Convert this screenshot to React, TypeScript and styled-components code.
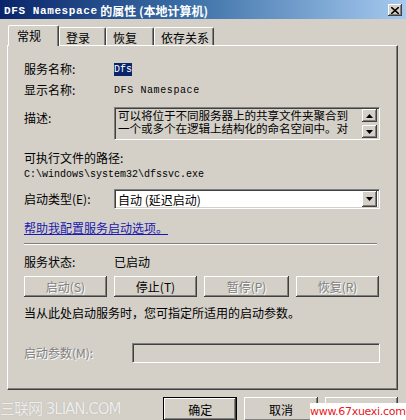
import styled, { createGlobalStyle, css } from "styled-components";

const GlobalStyle = createGlobalStyle`
  html, body {
    margin: 0;
    padding: 0;
    background: #d4d0c8;
  }
  body {
    font-family: "Noto Sans CJK SC", "DejaVu Sans", sans-serif;
    font-size: 12px;
    color: #000;
  }
`;

const Window = styled.div`
  position: relative;
  width: 406px;
  height: 420px;
  overflow: hidden;
  background: #d4d0c8;
  display: flex;
  flex-direction: column;
`;

const TitleBar = styled.div`
  height: 19px;
  display: flex;
  align-items: center;
  justify-content: space-between;
  padding: 0 4px 0 4px;
  background: linear-gradient(90deg, #0a246a 0%, #3a6ea5 45%, #a6caf0 100%);
  color: #fff;
  flex-shrink: 0;
`;

const TitleText = styled.div`
  font-weight: bold;
  font-size: 12px;
  display: flex;
  align-items: center;
  padding-top: 2px;
`;

const MonoText = styled.span<{ $size?: number; $spacing?: number }>`
  font-family: "Liberation Mono", "DejaVu Sans Mono", monospace;
  font-size: ${(p) => p.$size ?? 10}px;
  letter-spacing: ${(p) => p.$spacing ?? 0}px;
`;

const CloseButton = styled.div`
  width: 14px;
  height: 12px;
  margin-top: 1px;
  background: #d4d0c8;
  box-shadow: inset -1px -1px #404040, inset 1px 1px #fff,
    inset -2px -2px #808080;
  display: flex;
  align-items: center;
  justify-content: center;
`;

const Body = styled.div`
  padding: 0 8px 0 7px;
  display: flex;
  flex-direction: column;
`;

const TabRow = styled.div`
  height: 26px;
  display: flex;
  align-items: flex-end;
  padding-left: 1px;
  position: relative;
  z-index: 2;
`;

const Tab = styled.div<{ $w: number; $active?: boolean }>`
  width: ${(p) => p.$w}px;
  box-sizing: border-box;
  height: 18px;
  border-left: 1px solid #fff;
  border-top: 1px solid #fff;
  border-right: 1px solid #404040;
  box-shadow: inset -1px 0 #808080;
  border-radius: 2px 2px 0 0;
  background: #d4d0c8;
  display: flex;
  align-items: center;
  padding-left: ${(p) => (p.$active ? 8 : 6)}px;
  font-size: 12px;
  ${(p) =>
    p.$active
      ? css`
          margin-bottom: -1px;
          height: 21px;
          padding-bottom: 2px;
        `
      : css`
          padding-top: 2px;
        `}
`;

const Panel = styled.div`
  height: 345px;
  box-sizing: border-box;
  border-left: 1px solid #fff;
  border-top: 1px solid #fff;
  border-right: 1px solid #404040;
  border-bottom: 1px solid #404040;
  box-shadow: inset -1px -1px #808080;
  padding: 0 17px 0 16px;
  display: flex;
  flex-direction: column;
`;

const Field = styled.div<{ $top: number; $h: number; $align?: string }>`
  margin-top: ${(p) => p.$top}px;
  height: ${(p) => p.$h}px;
  display: flex;
  align-items: ${(p) => p.$align ?? "center"};
  flex-shrink: 0;
`;

const Label = styled.div<{ $w?: number; $disabled?: boolean; $pt?: number }>`
  width: ${(p) => (p.$w ? `${p.$w}px` : "auto")};
  flex-shrink: 0;
  line-height: 14px;
  padding-top: ${(p) => p.$pt ?? 0}px;
  white-space: nowrap;
  ${(p) =>
    p.$disabled &&
    css`
      color: #808080;
      text-shadow: 1px 1px #fff;
    `}
`;

const Selected = styled.span`
  background: #0a246a;
  color: #fff;
  padding: 1px 0;
`;

const Sunken = styled.div<{ $w: number; $h: number; $bg?: string }>`
  width: ${(p) => p.$w}px;
  height: ${(p) => p.$h}px;
  box-sizing: border-box;
  background: ${(p) => p.$bg ?? "#fff"};
  border-left: 1px solid #808080;
  border-top: 1px solid #808080;
  border-right: 1px solid #fff;
  border-bottom: 1px solid #fff;
  box-shadow: inset 1px 1px #404040, inset -1px -1px #d4d0c8;
  display: flex;
`;

const DescText = styled.div`
  flex: 1;
  min-width: 0;
  padding: 1px 0 0 3px;
  line-height: 13px;
  font-size: 11.6px;
  letter-spacing: -0.1px;
  white-space: nowrap;
  overflow: hidden;
`;

const ScrollCol = styled.div`
  width: 17px;
  flex-shrink: 0;
  display: flex;
  flex-direction: column;
  justify-content: space-between;
  padding: 1px 2px 1px 0;
  box-sizing: border-box;
`;

const ArrowBtn = styled.div<{ $h: number }>`
  width: 15px;
  height: ${(p) => p.$h}px;
  box-sizing: border-box;
  background: #d4d0c8;
  box-shadow: inset -1px -1px #404040, inset 1px 1px #fff,
    inset -2px -2px #808080;
  display: flex;
  align-items: center;
  justify-content: center;
`;

const ComboText = styled.div`
  flex: 1;
  padding-left: 3px;
  display: flex;
  align-items: center;
`;

const Link = styled.div`
  color: #1a1ab0;
  text-decoration: underline;
  line-height: 14px;
`;

const Separator = styled.div`
  height: 2px;
  width: 353px;
  border-top: 1px solid #808080;
  border-bottom: 1px solid #fff;
  box-sizing: border-box;
`;

const ButtonRow = styled.div<{ $gap: number }>`
  display: flex;
  gap: ${(p) => p.$gap}px;
`;

const Button = styled.div<{
  $w: number;
  $h?: number;
  $disabled?: boolean;
  $default?: boolean;
}>`
  width: ${(p) => p.$w}px;
  height: ${(p) => p.$h ?? 21}px;
  box-sizing: border-box;
  background: #d4d0c8;
  display: flex;
  align-items: center;
  justify-content: center;
  box-shadow: inset -1px -1px #404040, inset 1px 1px #fff,
    inset -2px -2px #808080;
  ${(p) =>
    p.$default &&
    css`
      border: 1px solid #000;
    `}
  ${(p) =>
    p.$disabled &&
    css`
      color: #808080;
      text-shadow: 1px 1px #fff;
    `}
`;

const Footer = styled.div`
  margin-top: 7px;
  display: flex;
  padding-left: 156px;
  gap: 7px;
`;

const WatermarkLeft = styled.div`
  position: absolute;
  left: 0;
  top: 400px;
  font-family: "DejaVu Sans", "Noto Sans CJK SC", sans-serif;
  font-size: 15px;
  line-height: 18px;
  letter-spacing: -1px;
  color: rgba(255, 255, 255, 0.8);
  text-shadow: 0 0 1px rgba(150, 150, 150, 0.7);
  white-space: nowrap;
`;

const WatermarkRight = styled.div`
  position: absolute;
  left: 310px;
  top: 403px;
  width: 96px;
  height: 17px;
  background: #fff;
  color: #e8161b;
  font-family: "DejaVu Sans", sans-serif;
  font-size: 11px;
  line-height: 17px;
  letter-spacing: -0.3px;
  white-space: nowrap;
  overflow: hidden;
`;

const Tri = ({ up }: { up?: boolean }) => (
  <svg width="7" height="4" viewBox="0 0 7 4">
    <path d={up ? "M3.5 0 L7 4 L0 4 Z" : "M0 0 L7 0 L3.5 4 Z"} fill="#000" />
  </svg>
);

export default function App() {
  return (
    <Window>
      <GlobalStyle />
      <TitleBar>
        <TitleText>
          <MonoText $size={11} $spacing={0.6}>
            DFS Namespace
          </MonoText>
          &nbsp;的属性 (本地计算机)
        </TitleText>
        <CloseButton>
          <svg width="8" height="7" viewBox="0 0 8 7">
            <path d="M0 0 L8 7 M8 0 L0 7" stroke="#000" strokeWidth="1.6" />
          </svg>
        </CloseButton>
      </TitleBar>
      <Body>
        <TabRow>
          <Tab $w={51} $active>
            常规
          </Tab>
          <Tab $w={47}>登录</Tab>
          <Tab $w={48}>恢复</Tab>
          <Tab $w={60}>依存关系</Tab>
        </TabRow>
        <Panel>
          <Field $top={14} $h={18}>
            <Label $w={90}>服务名称:</Label>
            <MonoText>
              <Selected>Dfs</Selected>
            </MonoText>
          </Field>
          <Field $top={3} $h={18}>
            <Label $w={90}>显示名称:</Label>
            <MonoText $spacing={0.6}>DFS Namespace</MonoText>
          </Field>
          <Field $top={8} $h={33} $align="flex-start">
            <Label $w={90} $pt={4}>
              描述:
            </Label>
            <Sunken $w={267} $h={33} $bg="#d4d0c8">
              <DescText>
                可以将位于不同服务器上的共享文件夹聚合到
                <br />
                一个或多个在逻辑上结构化的命名空间中。对
              </DescText>
              <ScrollCol>
                <ArrowBtn $h={13}>
                  <Tri up />
                </ArrowBtn>
                <ArrowBtn $h={13}>
                  <Tri />
                </ArrowBtn>
              </ScrollCol>
            </Sunken>
          </Field>
          <Field $top={10} $h={16}>
            <Label>可执行文件的路径:</Label>
          </Field>
          <Field $top={0} $h={16}>
            <MonoText>C:\windows\system32\dfssvc.exe</MonoText>
          </Field>
          <Field $top={7} $h={20}>
            <Label $w={90}>启动类型(E):</Label>
            <Sunken $w={267} $h={20}>
              <ComboText>自动 (延迟启动)</ComboText>
              <ScrollCol>
                <ArrowBtn $h={16}>
                  <Tri />
                </ArrowBtn>
              </ScrollCol>
            </Sunken>
          </Field>
          <Field $top={11} $h={16}>
            <Link>帮助我配置服务启动选项。</Link>
          </Field>
          <Field $top={7} $h={2}>
            <Separator />
          </Field>
          <Field $top={9} $h={16}>
            <Label $w={90}>服务状态:</Label>
            <Label>已启动</Label>
          </Field>
          <Field $top={6} $h={21}>
            <ButtonRow $gap={7}>
              <Button $w={83} $disabled>
                启动(S)
              </Button>
              <Button $w={83}>停止(T)</Button>
              <Button $w={85} $disabled>
                暂停(P)
              </Button>
              <Button $w={83} $disabled>
                恢复(R)
              </Button>
            </ButtonRow>
          </Field>
          <Field $top={8} $h={16}>
            <Label>当从此处启动服务时，您可指定所适用的启动参数。</Label>
          </Field>
          <Field $top={22} $h={20}>
            <Label $w={108} $disabled>
              启动参数(M):
            </Label>
            <Sunken $w={249} $h={20} $bg="#d4d0c8" />
          </Field>
        </Panel>
        <Footer>
          <Button $w={75} $h={24} $default>
            确定
          </Button>
          <Button $w={74} $h={24}>
            取消
          </Button>
          <Button $w={74} $h={24} $disabled>
            应用(A)
          </Button>
        </Footer>
      </Body>
      <WatermarkLeft>三联网 3LIAN.COM</WatermarkLeft>
      <WatermarkRight>www.67xuexi.com</WatermarkRight>
    </Window>
  );
}
